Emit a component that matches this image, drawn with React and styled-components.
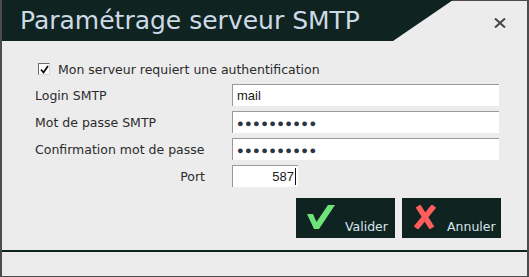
import styled, { createGlobalStyle } from 'styled-components'

const GlobalStyle = createGlobalStyle`
  html, body {
    margin: 0;
    padding: 0;
    background: #ececec;
  }
  * {
    box-sizing: border-box;
  }
`

const App = () => {
  return (
    <>
      <GlobalStyle />
      <Window>
        <Header>
          <TitleBand>
            <Title>Paramétrage serveur SMTP</Title>
          </TitleBand>
          <CloseArea>
            <CloseButton aria-label="Fermer">
              <svg width="12" height="10" viewBox="0 0 12 10">
                <path d="M1 0.5 L11 9.5 M11 0.5 L1 9.5" stroke="#454545" strokeWidth="2" fill="none" />
              </svg>
            </CloseButton>
          </CloseArea>
        </Header>

        <Body>
          <Form>
            <CheckRow>
              <CheckBox>
                <svg width="9" height="9" viewBox="0 0 9 9">
                  <path d="M1 4.5 L3.5 7.5 L8 1" stroke="#111" strokeWidth="1.8" fill="none" />
                </svg>
              </CheckBox>
              <CheckLabel>Mon serveur requiert une authentification</CheckLabel>
            </CheckRow>

            <Label>Login SMTP</Label>
            <Field>mail</Field>

            <Label>Mot de passe SMTP</Label>
            <Field $secret>●●●●●●●●●●</Field>

            <Label>Confirmation mot de passe</Label>
            <Field $secret>●●●●●●●●●●</Field>

            <Label $right>Port</Label>
            <Field $small $alignRight>
              587<Caret />
            </Field>
          </Form>

          <Actions>
            <ActionButton>
              <svg width="28" height="24" viewBox="0 0 28 24">
                <polygon points="0,9 6,9 9.5,17 21,0 28,0 12,24 7,24" fill="#6fe27a" />
              </svg>
              <ButtonText>Valider</ButtonText>
            </ActionButton>
            <ActionButton>
              <svg width="24" height="24" viewBox="0 0 24 24">
                <path d="M5 1 L19 23 M21 1 L3 23" stroke="#ff5c5c" strokeWidth="5.5" fill="none" />
              </svg>
              <ButtonText>Annuler</ButtonText>
            </ActionButton>
          </Actions>
        </Body>

        <Divider />
        <Footer />
      </Window>
    </>
  )
}

export default App

const Window = styled.div`
  width: 529px;
  height: 277px;
  display: flex;
  flex-direction: column;
  background: #ececec;
  border: 1px solid #4c4c4c;
  border-left-width: 2px;
  border-right-width: 2px;
  border-top: none;
  font-family: "DejaVu Sans", Verdana, sans-serif;
  color: #2b2b2b;
`

const Header = styled.div`
  display: flex;
  height: 40px;
  border-top: 1px solid #4c4c4c;
`

const TitleBand = styled.div`
  width: 451px;
  margin-top: -1px;
  height: 41px;
  background: #0f2420;
  clip-path: polygon(0 0, 100% 0, 391px 100%, 0 100%);
  display: flex;
  align-items: center;
  padding-left: 18px;
`

const Title = styled.h1`
  margin: 0;
  font-family: "DejaVu Sans", Verdana, sans-serif;
  font-weight: normal;
  font-size: 25px;
  color: #cddae6;
  white-space: nowrap;
  padding-bottom: 1px;
`

const CloseArea = styled.div`
  flex: 1;
  display: flex;
  justify-content: flex-end;
  align-items: flex-start;
  padding: 17px 21px 0 0;
`

const CloseButton = styled.button`
  border: none;
  background: none;
  padding: 0;
  display: flex;
  cursor: pointer;
`

const Body = styled.div`
  display: flex;
  flex-direction: column;
  padding: 19px 26px 0 33px;
`

const Form = styled.div`
  display: grid;
  grid-template-columns: 197px 267px;
  grid-template-rows: 20px repeat(4, 22px);
  row-gap: 5px;
  align-items: center;
  font-size: 12.5px;
`

const CheckRow = styled.div`
  grid-column: 1 / -1;
  display: flex;
  align-items: center;
  gap: 8px;
`

const CheckBox = styled.span`
  width: 12px;
  height: 12px;
  margin-left: 3px;
  border: 1px solid #6a6a6a;
  border-right-color: #d8d8d8;
  border-bottom-color: #d8d8d8;
  background: #fff;
  display: flex;
  align-items: center;
  justify-content: center;
`

const CheckLabel = styled.span`
  color: #2b2b2b;
`

const Label = styled.span`
  justify-self: ${props => props.$right ? 'end' : 'start'};
  padding-right: ${props => props.$right ? '27px' : '0'};
  color: #2b2b2b;
`

const Field = styled.div`
  width: ${props => props.$small ? '66px' : '267px'};
  height: 22px;
  background: #fff;
  border-top: 1px solid #9a9a9a;
  border-left: 1px solid #9a9a9a;
  display: flex;
  align-items: center;
  justify-content: ${props => props.$alignRight ? 'flex-end' : 'flex-start'};
  padding: ${props => props.$alignRight ? '0 2px 0 0' : '0 0 0 4px'};
  font-family: "Liberation Sans", Arial, sans-serif;
  font-size: ${props => props.$secret ? '11px' : '13px'};
  letter-spacing: ${props => props.$secret ? '1.4px' : '0'};
  color: ${props => props.$secret ? '#2c3440' : '#1a1a1a'};
`

const Caret = styled.span`
  display: inline-block;
  width: 1px;
  height: 17px;
  background: #111;
  margin-left: 1px;
`

const Actions = styled.div`
  display: flex;
  justify-content: flex-end;
  gap: 7px;
  margin-top: 11px;
`

const ActionButton = styled.button`
  width: 99px;
  height: 40px;
  background: #0f2420;
  border: none;
  display: flex;
  align-items: flex-end;
  gap: 10px;
  padding: 0 0 4px 11px;
  cursor: pointer;

  svg {
    align-self: center;
    margin-top: 2px;
  }
`

const ButtonText = styled.span`
  font-family: "DejaVu Sans", Verdana, sans-serif;
  font-size: 12.5px;
  color: #d8e4ec;
`

const Divider = styled.div`
  height: 2px;
  background: #0f2420;
  margin-top: 12px;
`

const Footer = styled.div`
  flex: 1;
`
